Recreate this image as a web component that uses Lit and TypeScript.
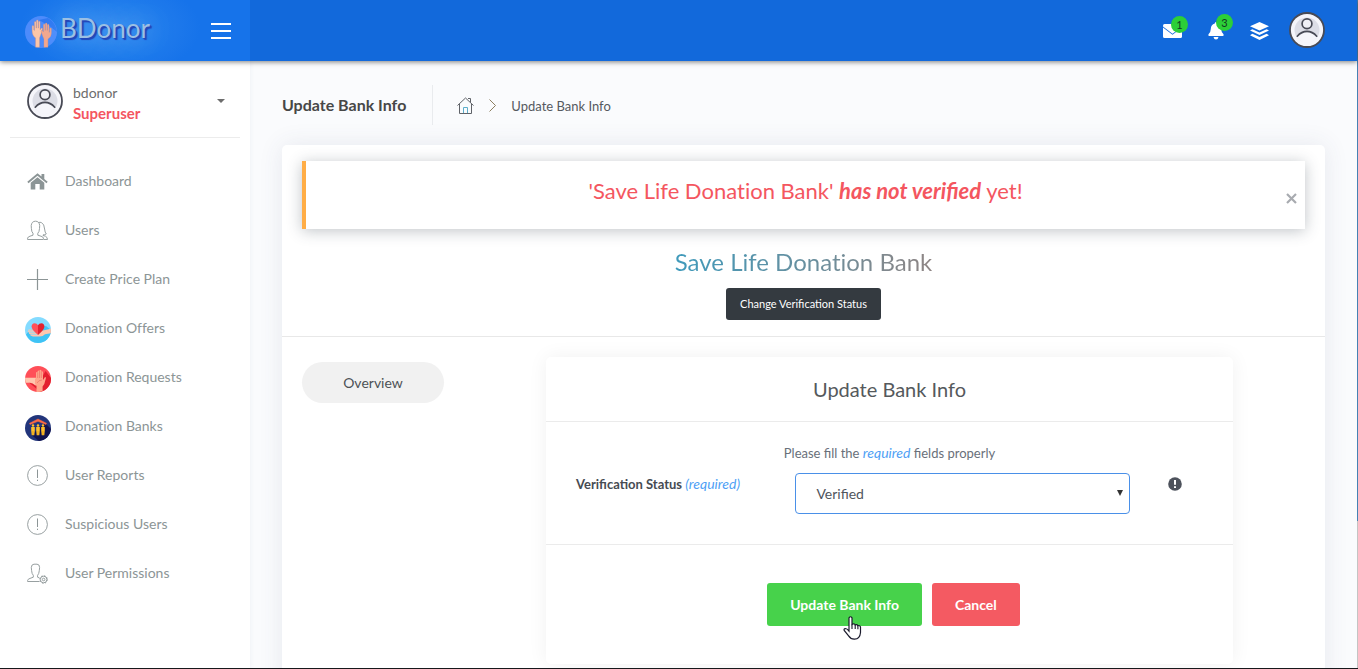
import { LitElement, html, css, svg } from "lit";
import { customElement, property } from "lit/decorators.js";

const hand = svg`<path d="M4.600 25.200V17.600Q1.500 15.500 1.500 12V8.200Q1.500 7.400 2.200 7.400T3 8.200V11L3.600 11.500V4.800Q3.600 4 4.300 4T5 4.800V9.500H5.400V3.600Q5.400 2.800 6.200 2.800T6.900 3.600V9.500H7.300V4.600Q7.300 3.800 8 3.800T8.700 4.600V11L10 9.500Q11.200 9.500 10.800 10.600L9.300 15L8.200 17.600V25.200Z"/>`;

const icons: Record<string, unknown> = {
  avatar: svg`<circle cx="18" cy="18" r="17" fill="#f5f5fa" stroke="#484a55" stroke-width="1.800"/>
    <circle cx="18" cy="18" r="12.500" fill="#dcdde6"/>
    <path d="M8 25Q18 16 28 25Q24 31 18 31T8 25Z" fill="#f5f5fa"/>
    <circle cx="18" cy="11.800" r="4.900" fill="#f0f0f6" stroke="#484a55" stroke-width="1.700"/>
    <path d="M8.300 24.200Q12.500 19.400 18 19.400T27.700 24.200" fill="none" stroke="#484a55" stroke-width="1.700" stroke-linecap="round"/>`,
  logo: svg`<circle cx="16" cy="17" r="16" fill="#4d8bfb"/>
    <path d="M14 5L23 3Q31 8 32 17L26 12Z" fill="#2f78f2"/>
    <g fill="#fdc6a8" stroke="#d98f78" stroke-width=".3">
      <g transform="translate(5.500 1.500) scale(1.100 1.220)">${hand}</g>
      <g transform="translate(28 5) scale(-1.100 1.080)" fill="#f5a78c">${hand}</g>
    </g>`,
  home: svg`<path d="M.3 10.800L10.500 2.200L14.500 5.500V3H17.300V8L20.700 10.800L19.500 12.200L10.500 4.800L1.500 12.200Z"/>
    <path d="M3.700 11.800L10.500 6.200L17.300 11.800V18.500H12.700V13H8.300V18.500H3.700Z"/>`,
  users: svg`<g fill="none" stroke="currentColor" stroke-width=".9">
    <path d="M.6 19.500V18.200Q.8 16.800 3 16.200L6 15.200V13.300Q4.500 12 4.400 8.500L4.200 5.500Q4.800 1.200 8.500 1.200T12.700 5.500L12.500 8.500Q12.300 12 10.800 13.300V15.200L14 16.200Q16.300 16.800 16.400 18.200V19.500Z"/>
    <path d="M11.600 2.600Q13 1.900 14.500 2.600Q17.300 4 17.600 9Q17.900 12.700 19.300 13.900Q18 15 16 14.900V15.500L18.500 16.200Q20.300 17 20.500 19.500H17"/></g>`,
  plus: svg`<path d="M10.500 0V21M0 10.500H21" stroke="currentColor" stroke-width="1.200"/>`,
  alert: svg`<g fill="none" stroke="currentColor" stroke-width=".9"><circle cx="10.500" cy="10.500" r="9.900"/><path d="M10.500 4.500V13M10.500 14.700V16" stroke-width="1"/></g>`,
  userCog: svg`<g fill="none" stroke="currentColor" stroke-width=".9">
    <path d="M12.500 18.500H.6V17.500Q.8 16 3 15.400L6.300 14.200V12.300Q4.800 11 4.600 7.500L4.300 4.500Q4.500 1.200 7 1.200H10Q12.600 1.200 12.600 4.500L12.300 7.500Q12 11 10.600 12.300V14.200L12.500 15"/>
    <circle cx="16.600" cy="16.500" r="3.300"/><circle cx="16.600" cy="16.500" r="1.300"/>
    <circle cx="16.600" cy="16.500" r="3.800" stroke-dasharray="1.400 1.584"/></g>`,
  offers: svg`<circle cx="13" cy="13" r="13" fill="#84dbff"/>
    <path d="M1 17.500L5 13L21 9L26 13A13 13 0 0 1 13 26Q5 25.800 1 17.500Z" fill="#3fc3f5"/>
    <path d="M3.500 12.500H12L18 13.500L25.900 11.800V16.300L20 17.200Q18 19.500 14.500 19.500H8L5.500 18.400V17.200L4 16.800V15.400L3 15V13.800H3.500Z" fill="#ffc6ae"/>
    <path d="M3.500 14H13M4.500 15.700H13M6 17.400H13" stroke="#84dbff" stroke-width=".7"/>
    <path d="M13 18Q6.600 12.800 6.600 9.600Q6.700 6.600 9.600 6.300Q12 6.300 13 8.300V18Z" fill="#ff4f58"/>
    <path d="M13 18Q19.400 12.800 19.400 9.600Q19.300 6.600 16.400 6.300Q14 6.300 13 8.300V18Z" fill="#e3202f"/>`,
  requests: svg`<circle cx="13" cy="13" r="13" fill="#ff4f58"/>
    <path d="M20.500 5L26 12A13 13 0 0 1 15 25.800L1 14L16 13Z" fill="#e3202f"/>
    <path d="M0 11.700H11.500L13.500 14V18L10.500 19.500Q7.500 16.700 5 16.700H.6Q0 14 0 11.700Z" fill="#ffc6ae"/>
    <path d="M11 12V6.500Q12.100 5.700 12.600 6.500V5Q13.800 3.900 14.500 5V4.400Q15.600 3.300 16.400 4.400V5.600Q17.500 4.800 18 6V14L20 11Q21.500 11.200 20.800 12.500L19.300 18L17.600 20.500V25Q15 26.200 11.500 25.900V20L10 18V13Z" fill="#ffa68c"/>
    <path d="M12.700 6.500V12M14.500 5V12M16.300 5.500V12M12 17Q13.500 14 17 14" fill="none" stroke="#e9695f" stroke-width=".6"/>`,
  banks: svg`<circle cx="13" cy="13" r="13" fill="#22357b"/>
    <path d="M20 8L26 14A13 13 0 0 1 14 26L6.500 20Z" fill="#11134f"/>
    <path d="M4.500 8.300L13 4L21.500 8.300L21 9.500L13 6.300L5 9.500Z" fill="#ff6a43" stroke="#ff6a43" stroke-width=".5"/>
    <g fill="#ffc02a"><circle cx="8" cy="10.500" r="1.200"/><circle cx="13" cy="10.500" r="1.200"/><circle cx="18" cy="10.500" r="1.200"/>
    <path d="M6.200 12H9.800V15.500L9.300 20.300H6.700L6.200 15.500ZM11.200 12H14.800V15.500L14.300 20.300H11.700L11.200 15.500ZM16.200 12H19.800V15.500L19.300 20.300H16.700L16.200 15.500Z"/></g>
    <path d="M8 16V20M13 16V20M18 16V20" stroke="#d98c10" stroke-width=".6"/>`,
  menu: svg`<path d="M0 1H20M0 8H20M0 15H20" stroke="#fff" stroke-width="1.800"/>`,
  mail: svg`<path d="M1.500 0H17.500Q19 0 19 1.500V2.500L9.500 9.800L0 2.500V1.500Q0 0 1.500 0Z"/><path d="M0 3.600L9.500 10.800L19 3.600V12.500Q19 14 17.500 14H1.500Q0 14 0 12.500Z"/>`,
  bell: svg`<path d="M8 0Q9.200 0 9.200 1.500Q13.200 2.500 13.200 7Q13.300 10.500 15.500 12.200Q16.200 14 14.800 14H1.200Q-.2 14 .5 12.200Q2.700 10.500 2.800 7Q2.800 2.500 6.800 1.500Q6.800 0 8 0ZM5.500 15H10.500Q10 17.500 8 17.500T5.500 15Z"/>`,
  layers: svg`<path d="M9.500 0L19 4.300L9.500 8.600L0 4.300ZM2.400 7.200L9.500 10.500L16.600 7.200L19 8.500L9.500 13L0 8.500ZM2.400 11.700L9.500 15L16.600 11.700L19 13.200L9.500 18L0 13.200Z"/>`,
  crumbHome: svg`<g fill="none" stroke="#5f6268" stroke-width="1"><path d="M.5 8.500L8.500 1L16.500 8.500M2.500 7V16.500H14.500V7M11 1.500H13.500V5.500"/><path d="M6.500 16V10.500H10.500V16" stroke="#5caecb"/></g>`,
  chevron: svg`<path d="M.5 .5L6.500 6.500L.5 12.500" fill="none" stroke="#8d7f60"/>`,
  info: svg`<circle cx="7" cy="7" r="6.800" fill="#4d525c"/><path d="M7 3V7.800M7 9.300V11" stroke="#fff" stroke-width="2"/>`,
  close: svg`<path d="M1 1L10 10M10 1L1 10" stroke="#a8abb0" stroke-width="2.200"/>`,
  pointer: svg`<path d="M6 1.800Q7.500-.3 9 1.800V8.500L10 8Q11.600 7.400 12.200 9Q14 8 14.800 9.700Q17 9 17.500 11V16.500Q17 22.800 11.500 23.200Q7.700 23.300 5.600 19.900L1.200 14.500Q.6 12.800 2.400 12.500Q4 12.600 6 15Z" fill="#fff" stroke="#1a1a2c" stroke-width="1.200"/><path d="M9 8.500V13M12.200 9V13M14.900 10V13.300" stroke="#1a1a2c" stroke-width="1.100"/>`,
};

const icon = (name: string, w: number, h = w) =>
  html`<svg width=${w} height=${h} viewBox="0 0 ${w} ${h}" fill="currentColor" aria-hidden="true">${icons[name]}</svg>`;

const base = css`
  *, *::before, *::after { box-sizing: border-box; }
  svg { display: block; flex: none; overflow: visible; }
  a { color: inherit; text-decoration: none; }
  button { font: inherit; color: inherit; border: 0; background: none; padding: 0; cursor: pointer; }
`;

@customElement("top-bar")
class TopBar extends LitElement {
  static styles = [base, css`
    :host { display: block; position: relative; z-index: 2; }
    .bar { display: flex; height: 61px; background: #1269db; box-shadow: 0 1px 5px rgba(0, 0, 0, .5); color: #fff; }
    .brand { width: 250px; padding: 0 19px 0 25px; display: flex; align-items: center; justify-content: space-between; background: radial-gradient(ellipse 90px 50px at 110px 28px, #2f86ee, #1673ea); }
    .logo { display: flex; gap: 3px; padding-top: 3px; }
    .name { font-size: 26px; line-height: 26px; color: #9cc0e4; text-shadow: 1px 1px 1px #2346b8, 2px 2px 1px #2346b8, 0 0 24px #7fc4ff; }
    .tools { flex: 1; display: flex; align-items: center; justify-content: flex-end; gap: 26px; padding-right: 32px; }
    .tool { position: relative; }
    .last { margin-left: -6px; }
    .last svg { margin-top: -2px; }
    .badge { position: absolute; left: 8px; top: -8px; width: 17px; height: 17px; border-radius: 50%; background: #2ccf38; color: #123a22; font-size: 11px; line-height: 17px; text-align: center; }
  `];
  render() {
    return html`<header class="bar">
      <div class="brand">
        <a class="logo" href="#">${icon("logo", 32, 34)}<span class="name">BDonor</span></a>
        <button aria-label="Toggle menu">${icon("menu", 20, 16)}</button>
      </div>
      <div class="tools">
        <button class="tool" aria-label="Messages">${icon("mail", 19, 14)}<span class="badge">1</span></button>
        <button class="tool" aria-label="Notifications">${icon("bell", 16, 18)}<span class="badge">3</span></button>
        <button class="tool" aria-label="Apps">${icon("layers", 19, 18)}</button>
        <button class="tool last" aria-label="Account">${icon("avatar", 36)}</button>
      </div>
    </header>`;
  }
}

@customElement("side-nav")
class SideNav extends LitElement {
  static styles = [base, css`
    :host { display: block; width: 250px; flex: none; background: #fff; box-shadow: 0 0 5px rgba(70, 90, 140, .08); }
    .user { display: flex; align-items: center; gap: 10px; width: calc(100% - 20px); margin: 0 10px; padding: 17px 15px 13px 17px; border-bottom: 1px solid #ececec; text-align: left; }
    .who { flex: 1; padding-top: 4px; font-size: 14px; line-height: 21px; color: #6d6d6d; }
    .role { display: block; font-size: 15px; font-weight: 700; color: #f4565f; }
    .caret { border: 4px solid transparent; border-top-color: #6d6d6d; border-bottom: 0; }
    nav { padding-top: 18px; font-variant-ligatures: none; }
    .item { display: flex; align-items: center; gap: 14px; height: 49px; padding-left: 25px; font-size: 14px; line-height: 20px; color: #8c9596; }
    .glyph { width: 26px; padding: 1px 0 0 2px; }
    .pic { padding: 4px 0 0; }
  `];
  render() {
    const items: [string, string, number][] = [
      ["home", "Dashboard", 21], ["users", "Users", 21], ["plus", "Create Price Plan", 21],
      ["offers", "Donation Offers", 26], ["requests", "Donation Requests", 26], ["banks", "Donation Banks", 26],
      ["alert", "User Reports", 21], ["alert", "Suspicious Users", 21], ["userCog", "User Permissions", 21],
    ];
    return html`<button class="user">${icon("avatar", 36)}
        <span class="who">bdonor<span class="role">Superuser</span></span><span class="caret"></span></button>
      <nav>${items.map(([name, label, size]) => html`<a class="item" href="#">
        <span class="glyph ${size > 21 ? "pic" : ""}">${icon(name, size)}</span>${label}</a>`)}</nav>`;
  }
}

@customElement("bank-form")
class BankForm extends LitElement {
  @property() heading = "Update Bank Info";
  static styles = [base, css`
    :host { display: block; background: #fff; border-radius: 5px; box-shadow: 0 0 20px rgba(0, 0, 0, .06); }
    h4 { margin: 0; padding: 20px 0; font-size: 20px; line-height: 24px; font-weight: 400; text-align: center; color: #55595c; border-bottom: 1px solid #ebebeb; }
    .fields { padding: 19px 30px 30px; border-bottom: 1px solid #ebebeb; }
    .hint { margin: 0; font-size: 13px; line-height: 24px; text-align: center; color: #69707a; }
    em { font-size: 14px; color: #4f9ff5; }
    .row { display: grid; grid-template-columns: 35% minmax(0, 1fr) 73px; padding-top: 8px; }
    label { font-size: 13px; line-height: 22px; font-weight: 700; color: #464b52; }
    label em { font-weight: 400; }
    .pick { position: relative; }
    select { display: block; appearance: none; width: 100%; height: 41px; padding: 0 20px; border: 1px solid #4a90e8; border-radius: 4px; background: #fff; font: inherit; font-size: 14px; color: #50555c; }
    .arrow { position: absolute; right: 7px; top: 17px; border: 3px solid transparent; border-top: 6px solid #333; border-bottom: 0; pointer-events: none; }
    .tip { padding: 4px 0 0 38px; }
    .actions { display: flex; justify-content: center; gap: 10px; padding: 38px 0 38px 8px; }
    .btn { position: relative; height: 43px; padding: 0 23px; border-radius: 3px; background: #47d24b; color: #fff; font-size: 14px; font-weight: 700; }
    .cancel { background: #f45a62; }
    .pointer { position: absolute; left: 76px; top: 33px; }
  `];
  render() {
    return html`<h4>${this.heading}</h4>
      <div class="fields">
        <p class="hint">Please fill the <em>required</em> fields properly</p>
        <div class="row">
          <label for="status">Verification Status <em>(required)</em></label>
          <div class="pick"><select id="status"><option>Verified</option></select><span class="arrow"></span></div>
          <div class="tip">${icon("info", 14)}</div>
        </div>
      </div>
      <div class="actions">
        <button class="btn">${this.heading}<span class="pointer">${icon("pointer", 18, 24)}</span></button>
        <button class="btn cancel">Cancel</button>
      </div>`;
  }
}

@customElement("app-root")
class AppRoot extends LitElement {
  static styles = [base, css`
    :host { display: flex; flex-direction: column; box-sizing: border-box; height: 100vh; overflow: hidden; font-family: Lato, "Open Sans", sans-serif; background: #fafbfd; border-bottom: 1px solid #17181c; }
    .frame { flex: 1; min-height: 0; display: flex; }
    .edge { width: 1px; background: linear-gradient(#4682b4 78%, #c4c4c4 0); }
    .page { flex: 1; min-width: 0; display: flex; flex-direction: column; }
    .body { flex: 1; display: flex; min-height: 0; }
    main { flex: 1; min-width: 0; display: flex; flex-direction: column; padding: 24px 32px 0; }
    .crumbs { display: flex; align-items: center; height: 40px; margin-bottom: 20px; font-size: 13px; line-height: 20px; color: #55595f; }
    h1 { margin: 0; padding-right: 26px; font-size: 16px; line-height: 40px; font-weight: 700; color: #474747; border-right: 1px solid #e9ebee; }
    .home { padding: 0 15px 0 24px; }
    .here { padding: 1px 0 0 15px; }
    .card { flex: 1; background: #fff; border-radius: 5px; box-shadow: 0 0 24px rgba(60, 70, 110, .1); }
    .top { padding: 16px 20px; border-bottom: 1px solid #e8e8e8; text-align: center; }
    .alert { display: flex; align-items: center; height: 68px; padding: 0 8px 0 19px; border-left: 4px solid #ffad46; background: #fff; box-shadow: 0 2px 14px rgba(60, 70, 85, .32); color: #f4565f; font-size: 22px; line-height: 28px; font-variant-ligatures: none; }
    .alert em { font-variant-ligatures: normal; }
    .alert p { flex: 1; margin: 0; padding-bottom: 8px; }
    .alert button { padding-top: 7px; }
    h2 { width: fit-content; margin: 17px auto 10px; font-size: 24px; line-height: 32px; font-weight: 400; color: transparent; background: linear-gradient(90deg, #3f9abb, #8f8584); background-clip: text; -webkit-background-clip: text; font-variant-ligatures: none; }
    .change { height: 32px; padding: 0 14px 2px; border-radius: 3px; background: #343a40; color: #fff; font-size: 11px; }
    .panes { display: flex; align-items: flex-start; padding: 20px 92px 24px 20px; }
    .tabs { width: 244px; padding-top: 5px; }
    .tab { display: block; width: 142px; border-radius: 21px; background: #f1f1f1; font-size: 14px; line-height: 41px; text-align: center; color: #4d5156; }
    bank-form { flex: 1; }
  `];
  render() {
    return html`<div class="frame">
      <div class="page">
        <top-bar></top-bar>
        <div class="body">
          <side-nav></side-nav>
          <main>
            <div class="crumbs">
              <h1>Update Bank Info</h1>
              <a class="home" href="#" aria-label="Home">${icon("crumbHome", 17)}</a>
              ${icon("chevron", 7, 13)}<span class="here">Update Bank Info</span>
            </div>
            <section class="card">
              <div class="top">
                <div class="alert" role="alert">
                  <p>'Save Life Donation Bank' <b><em>has not verified</em></b> yet!</p>
                  <button aria-label="Close">${icon("close", 11)}</button>
                </div>
                <h2>Save Life Donation Bank</h2>
                <button class="change">Change Verification Status</button>
              </div>
              <div class="panes">
                <div class="tabs"><a class="tab" href="#">Overview</a></div>
                <bank-form></bank-form>
              </div>
            </section>
          </main>
        </div>
      </div>
      <div class="edge"></div>
    </div>`;
  }
}
